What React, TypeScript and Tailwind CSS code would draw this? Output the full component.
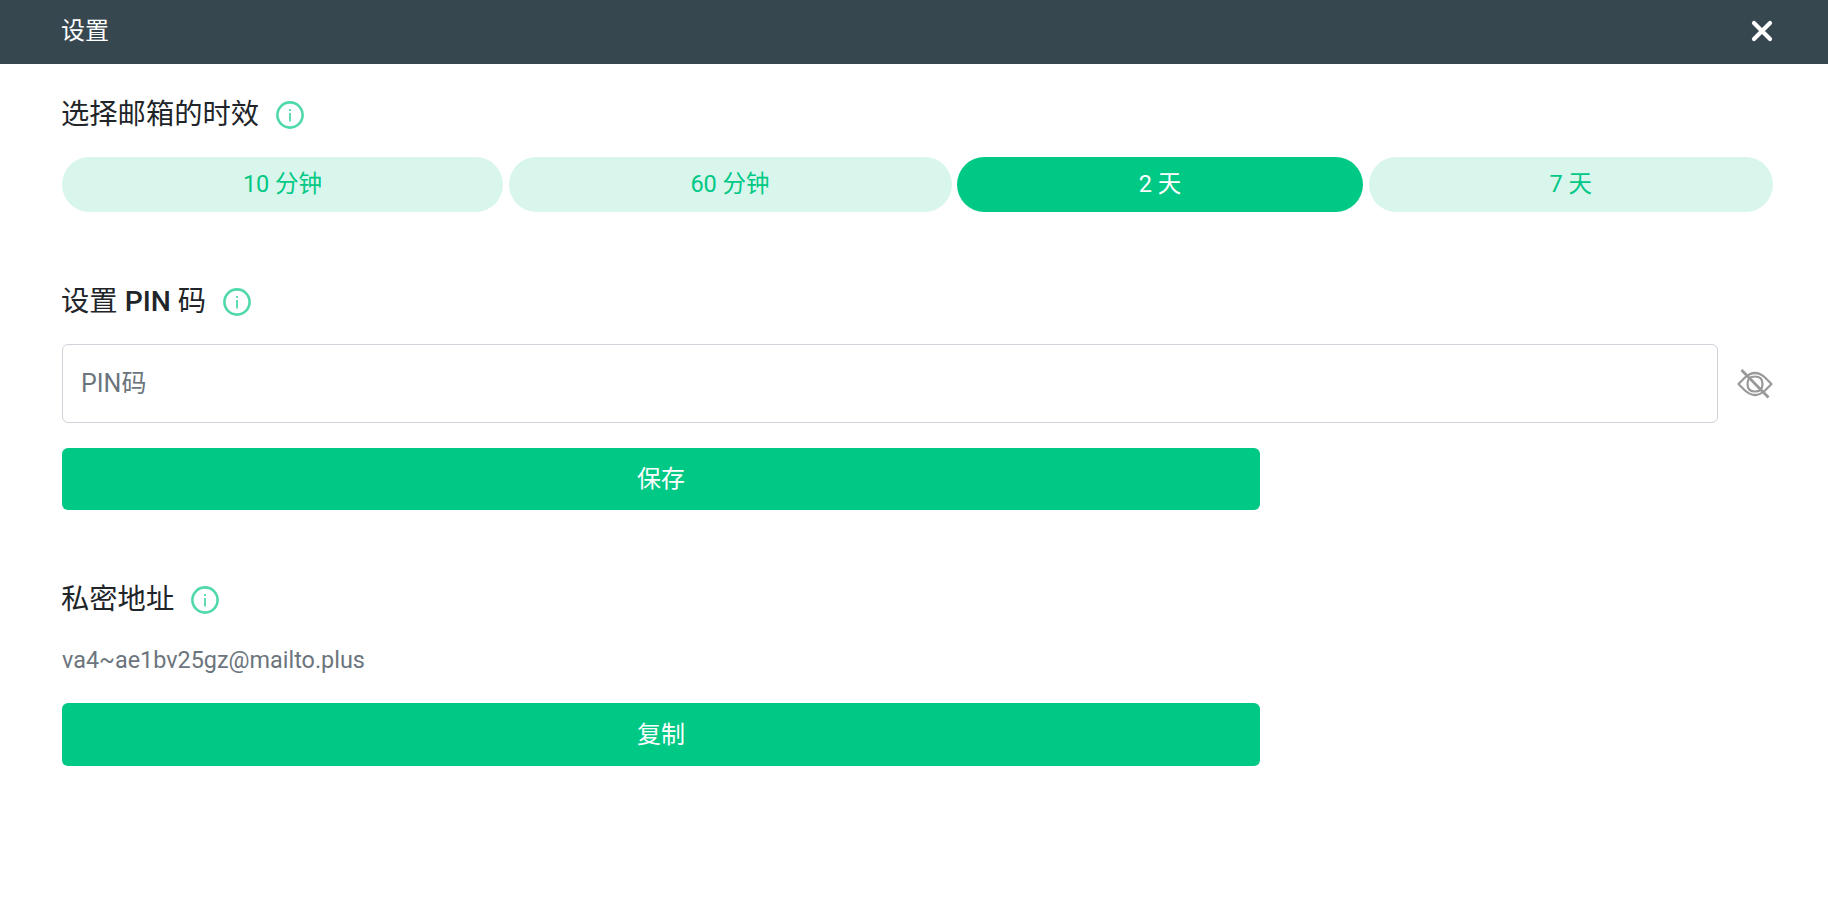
import {FC, ReactNode} from 'react'

const font = "font-['Roboto','Noto_Sans_CJK_SC',sans-serif]"

const InfoIcon = () => (
  <svg width="28" height="28" viewBox="0 0 28 28" fill="none" className="shrink-0">
    <circle cx="14" cy="14" r="12.6" stroke="#4fd8aa" strokeWidth="2.6" />
    <rect x="13.1" y="8" width="1.8" height="2" fill="#4fd8aa" />
    <rect x="13.1" y="12" width="1.8" height="8.5" fill="#4fd8aa" />
  </svg>
)

const CloseIcon = () => (
  <svg width="22" height="22" viewBox="0 0 22 22" fill="none">
    <path d="M3 3L19 19M19 3L3 19" stroke="#fff" strokeWidth="4.2" strokeLinecap="round" />
  </svg>
)

const EyeOffIcon = () => (
  <svg width="36" height="30" viewBox="0 0 36 30" fill="none" className="shrink-0">
    <path d="M1.5 15L8 8.5Q18 -0.5 28 8.5L34.5 15L28 21.5Q18 30.5 8 21.5Z" stroke="#999" strokeWidth="2.2" strokeLinejoin="round" />
    <path d="M10.5 15Q10.5 7.5 18 7.5Q25.5 7.5 25.5 15Q25.5 22.5 18 22.5Q10.5 22.5 10.5 15Z" stroke="#999" strokeWidth="2.2" />
    <path d="M4.5 1L31.5 28.5" stroke="#999" strokeWidth="2.8" />
  </svg>
)

const Label: FC<{children: ReactNode}> = ({children}) => (
  <div className="flex items-center gap-[17px] h-[36px] -ml-px">
    <span className="text-[28.3px] leading-[36px] text-[#212529]">{children}</span>
    <InfoIcon />
  </div>
)

const Pill: FC<{text: string; width: string; active?: boolean}> = ({text, width, active}) => (
  <button
    className={
      active
        ? `${width} h-[55px] rounded-[28px] bg-[#00c885] text-white text-[23.5px]`
        : `${width} h-[55px] rounded-[28px] bg-[#d9f6ec] text-[#00c885] text-[23.5px]`
    }
  >
    {text}
  </button>
)

const ActionButton: FC<{text: string; height: string}> = ({text, height}) => (
  <button className={`w-[1198px] ${height} rounded-[6px] bg-[#00c885] text-white text-[24px]`}>{text}</button>
)

export default function App() {
  return (
    <div className={`${font} min-h-[910px] bg-white`}>
      <div className="h-16 bg-[#37474f] flex items-center justify-between pl-[61px] pr-[55px] pb-[3px]">
        <span className="text-white text-[24px]">设置</span>
        <CloseIcon />
      </div>
      <div className="pl-[62px] pr-[55px] pt-[33px]">
        <Label>选择邮箱的时效</Label>
        <div className="flex gap-[5.5px] mt-[24px]">
          <Pill text="10 分钟" width="w-[441px]" />
          <Pill text="60 分钟" width="w-[443px]" />
          <Pill text="2 天" width="w-[406px]" active />
          <Pill text="7 天" width="w-[404.5px]" />
        </div>

        <div className="mt-[72px]">
          <Label>
            设置 <span className="font-medium">PIN</span> 码
          </Label>
        </div>
        <div className="flex items-center gap-[19px] mt-[24px]">
          <input
            placeholder="PIN码"
            className="grow h-[79px] px-[18px] rounded-[6px] border border-[#ced4da] text-[25px] placeholder:text-[#6c757d]"
          />
          <EyeOffIcon />
        </div>
        <div className="mt-[25px]">
          <ActionButton text="保存" height="h-[62px]" />
        </div>

        <div className="mt-[72px]">
          <Label>私密地址</Label>
        </div>
        <p className="mt-[26px] text-[23.4px] leading-[32px] text-[#6c757d]">va4~ae1bv25gz@mailto.plus</p>
        <div className="mt-[27px]">
          <ActionButton text="复制" height="h-[63px]" />
        </div>
      </div>
    </div>
  )
}
